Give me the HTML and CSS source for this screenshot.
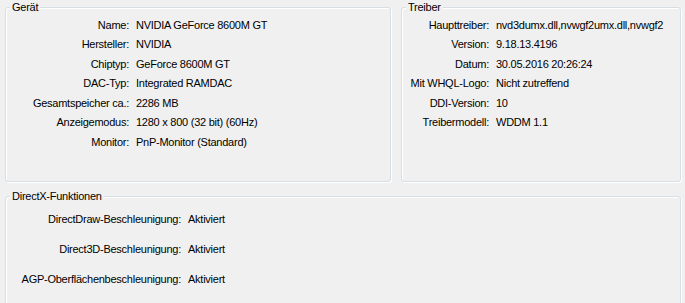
FILE: index.html
```html
<!DOCTYPE html>
<html lang="de">
<head>
<meta charset="utf-8">
<link rel="stylesheet" href="styles.css">
</head>
<body>
<div class="page">
  <div class="top">
    <section class="group device">
      <span class="caption">Gerät</span>
      <div class="rows">
        <div class="label">Name:</div><div class="value">NVIDIA GeForce 8600M GT</div>
        <div class="label">Hersteller:</div><div class="value">NVIDIA</div>
        <div class="label">Chiptyp:</div><div class="value">GeForce 8600M GT</div>
        <div class="label">DAC-Typ:</div><div class="value">Integrated RAMDAC</div>
        <div class="label">Gesamtspeicher ca.:</div><div class="value">2286 MB</div>
        <div class="label">Anzeigemodus:</div><div class="value">1280 x 800 (32 bit) (60Hz)</div>
        <div class="label">Monitor:</div><div class="value">PnP-Monitor (Standard)</div>
      </div>
    </section>
    <section class="group driver">
      <span class="caption">Treiber</span>
      <div class="rows">
        <div class="label">Haupttreiber:</div><div class="value clip">nvd3dumx.dll,nvwgf2umx.dll,nvwgf2</div>
        <div class="label">Version:</div><div class="value">9.18.13.4196</div>
        <div class="label">Datum:</div><div class="value">30.05.2016 20:26:24</div>
        <div class="label">Mit WHQL-Logo:</div><div class="value">Nicht zutreffend</div>
        <div class="label">DDI-Version:</div><div class="value">10</div>
        <div class="label">Treibermodell:</div><div class="value">WDDM 1.1</div>
      </div>
    </section>
  </div>
  <section class="group dx">
    <span class="caption">DirectX-Funktionen</span>
    <div class="rows">
      <div class="label">DirectDraw-Beschleunigung:</div><div class="value">Aktiviert</div>
      <div class="label">Direct3D-Beschleunigung:</div><div class="value">Aktiviert</div>
      <div class="label">AGP-Oberflächenbeschleunigung:</div><div class="value">Aktiviert</div>
    </div>
  </section>
</div>
</body>
</html>
```
FILE: styles.css
```css
html, body {
  margin: 0;
  padding: 0;
  background: #f0f0f0;
  width: 685px;
  height: 303px;
  overflow: hidden;
}
body {
  font-family: "Liberation Sans", Arial, sans-serif;
  font-size: 11px;
  letter-spacing: -0.25px;
  color: #000;
}
.page {
  padding: 7px 0 0 5px;
  display: flex;
  flex-direction: column;
  gap: 14px;
}
.top {
  display: grid;
  grid-template-columns: 386px 280px;
  column-gap: 10px;
}
.group {
  position: relative;
  box-sizing: border-box;
  border: 1px solid #d5dfe5;
  border-radius: 3px;
  box-shadow: 1px 1px 0 #fff, inset 1px 1px 0 #fff;
}
.device, .driver {
  height: 175px;
}
.dx {
  width: 676px;
  height: 120px;
}
.caption {
  position: absolute;
  top: -8px;
  left: 4px;
  padding: 0 2px;
  line-height: 14px;
  background: #f0f0f0;
}
.rows {
  display: grid;
  column-gap: 7px;
  line-height: 19.6px;
  white-space: nowrap;
}
.label {
  text-align: right;
}
.device .rows {
  grid-template-columns: 123px 1fr;
  padding-top: 7.5px;
}
.driver .rows {
  grid-template-columns: 87px 1fr;
  padding-top: 7.5px;
}
.dx .rows {
  grid-template-columns: 175px 1fr;
  padding-top: 13px;
  row-gap: 10.5px;
}
.value.clip {
  overflow: hidden;
}
```
